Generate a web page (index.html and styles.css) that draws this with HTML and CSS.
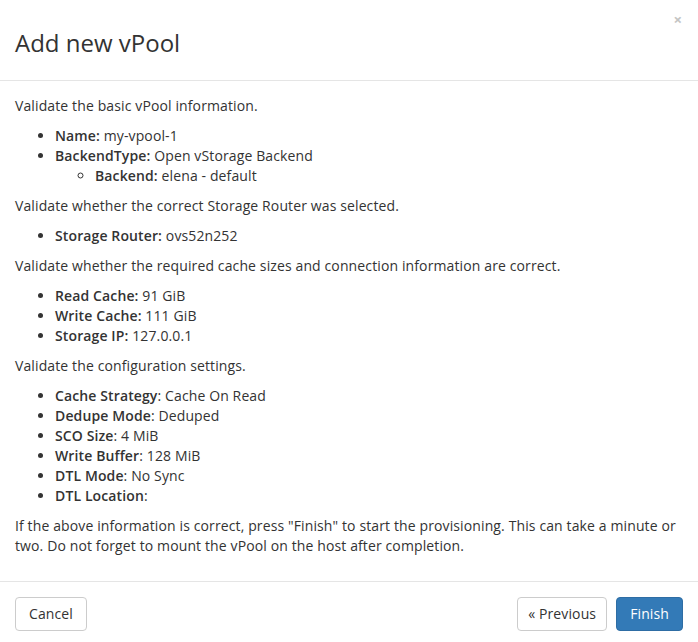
FILE: index.html
```html
<!DOCTYPE html>
<html>
<head>
<meta charset="utf-8">
<link rel="stylesheet" href="styles.css">
</head>
<body>
<div class="modal">
  <div class="modal-header">
    <button class="close" type="button">×</button>
    <h3 class="modal-title">Add new vPool</h3>
  </div>
  <div class="modal-body">
    <p>Validate the basic vPool information.</p>
    <ul>
      <li><b>Name:</b> my-vpool-1</li>
      <li><b>BackendType:</b> Open vStorage Backend
        <ul class="sub">
          <li><b>Backend:</b> elena - default</li>
        </ul>
      </li>
    </ul>
    <p>Validate whether the correct Storage Router was selected.</p>
    <ul>
      <li><b>Storage Router:</b> ovs52n252</li>
    </ul>
    <p>Validate whether the required cache sizes and connection information are correct.</p>
    <ul>
      <li><b>Read Cache:</b> 91 GiB</li>
      <li><b>Write Cache:</b> 111 GiB</li>
      <li><b>Storage IP:</b> 127.0.0.1</li>
    </ul>
    <p>Validate the configuration settings.</p>
    <ul>
      <li><b>Cache Strategy</b>: Cache On Read</li>
      <li><b>Dedupe Mode</b>: Deduped</li>
      <li><b>SCO Size</b>: 4 MiB</li>
      <li><b>Write Buffer</b>: 128 MiB</li>
      <li><b>DTL Mode</b>: No Sync</li>
      <li><b>DTL Location</b>:</li>
    </ul>
    <p>If the above information is correct, press "Finish" to start the provisioning. This can take a minute or two. Do not forget to mount the vPool on the host after completion.</p>
  </div>
  <div class="modal-footer">
    <button class="btn btn-cancel" type="button">Cancel</button>
    <div class="right">
      <button class="btn btn-prev" type="button">« Previous</button>
      <button class="btn btn-primary" type="button">Finish</button>
    </div>
  </div>
</div>
</body>
</html>
```
FILE: styles.css
```css
html, body {
  margin: 0;
  padding: 0;
  background: #fff;
}
body {
  font-family: "Open Sans", Roboto, sans-serif;
  font-size: 14px;
  line-height: 20px;
  color: #333;
  letter-spacing: 0.12px;
}
.modal {
  width: 698px;
}
.modal-header {
  position: relative;
  padding: 18px 15px 12px;
  border-bottom: 1px solid #e5e5e5;
  height: 50px;
}
.modal-title {
  margin: 0;
  font-size: 24px;
  font-weight: 400;
  line-height: 50px;
  color: #333;
  letter-spacing: 0;
}
.close {
  position: absolute;
  top: 9px;
  right: 16px;
  border: 0;
  background: none;
  padding: 0;
  font-size: 15px;
  line-height: 20px;
  color: #c4c4c4;
  font-family: "Open Sans", sans-serif;
  font-weight: 700;
}
.modal-body {
  padding: 15px;
}
p {
  margin: 0 0 10px;
}
ul {
  margin: 0 0 10px;
  padding-left: 40px;
}
ul.sub {
  margin: 0;
  list-style: circle;
}
b {
  font-weight: 600;
}
.modal-footer {
  border-top: 1px solid #e5e5e5;
  padding: 15px;
  display: flex;
  justify-content: space-between;
}
.right {
  display: flex;
  gap: 9px;
}
.btn {
  font-family: inherit;
  font-size: 14px;
  line-height: 20px;
  letter-spacing: 0.12px;
  padding: 6px 12px;
  border: 1px solid #ccc;
  border-radius: 4px;
  background: #fff;
  color: #333;
  height: 34px;
}
.btn-cancel {
  padding: 6px 13px;
}
.btn-prev {
  padding: 6px 10px;
}
.btn-primary {
  background: #337ab7;
  border-color: #2e6da4;
  color: #fff;
  padding: 6px 13px;
}
```
